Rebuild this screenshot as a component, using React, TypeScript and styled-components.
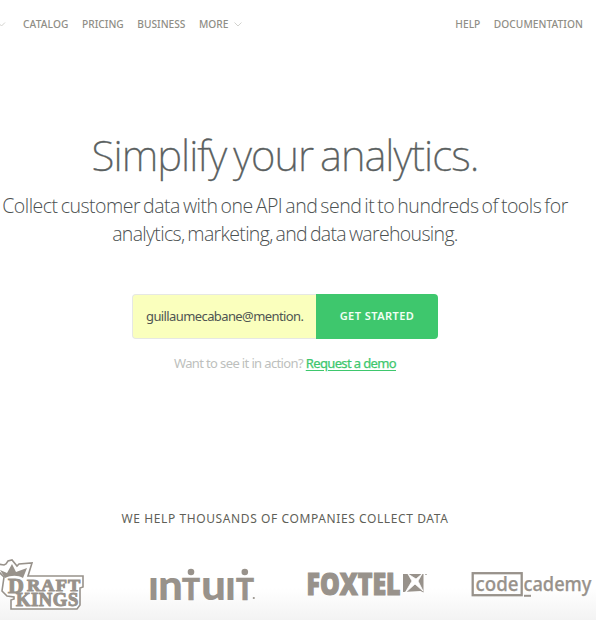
import React from 'react';
import styled, { createGlobalStyle } from 'styled-components';

const GlobalStyle = createGlobalStyle`
  * { box-sizing: border-box; }
  body { margin: 0; background: #fff; overflow: hidden; font-family: 'Noto Sans', sans-serif; }
`;

const Page = styled.div`
  width: 596px;
  height: 620px;
  display: flex;
  flex-direction: column;
  overflow: hidden;
  background: linear-gradient(#fff 0 588px, #f3f3f3 620px);
`;

const NavBar = styled.nav`
  height: 49px;
  padding-right: 13px;
  display: flex;
  align-items: center;
  justify-content: space-between;
`;

const NavGroup = styled.div<{ $gap: number }>`
  display: flex;
  align-items: center;
  gap: ${p => p.$gap}px;
`;

const NavLink = styled.a<{ $track?: number }>`
  font-size: 10.2px;
  line-height: 17px;
  font-weight: 500;
  letter-spacing: ${p => p.$track ?? 0}px;
  color: #8f8e86;
  white-space: nowrap;
`;

const Chevron = styled.svg`
  width: 8px;
  height: 5px;
  fill: none;
  stroke: #d2d2ce;
`;

const Hero = styled.main`
  width: 570px;
  padding-top: 77px;
  display: flex;
  flex-direction: column;
  align-items: center;
`;

const Title = styled.h1`
  margin: 0;
  height: 66px;
  line-height: 58px;
  font-size: 42px;
  font-weight: 200;
  letter-spacing: -0.95px;
  word-spacing: -3px;
  color: #5a5f5f;
  -webkit-text-stroke: 0.35px #5a5f5f;
  white-space: nowrap;
`;

const Lead = styled.p`
  margin: 0;
  font-family: 'Open Sans', sans-serif;
  font-size: 19.5px;
  line-height: 28px;
  font-weight: 300;
  color: #4c5151;
  text-align: center;
`;

const LeadLine = styled.span<{ $track: number }>`
  display: block;
  white-space: nowrap;
  letter-spacing: ${p => p.$track}px;
  word-spacing: -1.5px;
`;

const SignupForm = styled.form`
  display: flex;
  width: 306px;
  height: 45px;
  margin-top: 46px;
`;

const EmailField = styled.div`
  width: 184px;
  padding: 0 0 1px 13px;
  line-height: 42px;
  border: 1px solid #e6e8e4;
  border-right: 0;
  border-radius: 4px 0 0 4px;
  background: #faffbd;
  color: #4f5552;
  font-size: 13px;
  letter-spacing: -0.6px;
  white-space: nowrap;
  overflow: hidden;
`;

const SubmitButton = styled.button`
  flex: 1;
  border: 0;
  padding: 0 0 2px;
  border-radius: 0 4px 4px 0;
  background: #3ec76d;
  color: #f2fff5;
  font: 600 11px 'Noto Sans', sans-serif;
  letter-spacing: 0.45px;
`;

const DemoLine = styled.p`
  margin: 13px 0 0;
  line-height: 22px;
  font-size: 13px;
  letter-spacing: -0.63px;
  color: #bdbfbd;
  white-space: nowrap;
`;

const DemoLink = styled.a`
  color: #3ec76d;
  -webkit-text-stroke: 0.25px #3ec76d;
  text-decoration: underline;
  text-underline-offset: 2px;
`;

const Customers = styled.section`
  width: 596px;
  margin-top: 135px;
`;

const CustomersTitle = styled.h2`
  width: 570px;
  margin: 0;
  font-size: 12px;
  line-height: 20px;
  font-weight: 400;
  letter-spacing: 0.6px;
  text-align: center;
  color: #5f5f58;
`;

const LogoStrip = styled.div`
  display: grid;
  grid-template-columns: 145px 160px 165px 126px;
  margin-top: 21px;
`;

const Logo = styled.svg`
  display: block;
  height: 60px;
  width: 100%;
  fill: #98928b;
`;

const DraftKings = () => (
  <Logo viewBox="0 0 145 60" role="img" aria-label="DraftKings">
    <path d="M4 27-2 21v-7l6 1 2-1 2-3 4-1 5 6 2-2 13-1-4 13h55v11l-3 1v17l-3 4H11v-9l3-1v-2l-7-1-5-5z" fill="#fff" stroke="#98928b" strokeWidth="1.6" />
    <path d="M5 28 0 20l7 3 5-9 4 8 11-4-4 10c-5-3-12-3-18 0z" />
    <g fontFamily="Liberation Serif, serif" fontWeight="700" stroke="#98928b" strokeWidth="1">
      <text transform="translate(8 43) scale(1.1 1)" fontSize="20">D</text>
      <text transform="translate(27 41) scale(1.08 1)" fontSize="17" letterSpacing="1">RAFT</text>
      <text transform="translate(16 56) scale(1.03 1)" fontSize="18" letterSpacing=".6">KINGS</text>
    </g>
  </Logo>
);

const Intuit = () => (
  <Logo viewBox="0 0 160 60" role="img" aria-label="intuit">
    <g fontFamily="Lato, sans-serif" fontWeight="900" fontSize="42">
      <text x="3" y="49.5">ı</text>
      <text x="13" y="49.5" textLength="25" lengthAdjust="spacingAndGlyphs">n</text>
      <text x="37" y="49.5" fontSize="30" stroke="#98928b" strokeWidth=".6" textLength="18" lengthAdjust="spacingAndGlyphs">T</text>
      <text x="56" y="49.5" textLength="25" lengthAdjust="spacingAndGlyphs">u</text>
      <text x="80" y="49.5">ı</text>
      <text x="91" y="49.5" fontSize="30" stroke="#98928b" strokeWidth=".6" textLength="18" lengthAdjust="spacingAndGlyphs">T</text>
    </g>
    <circle cx="46" cy="22" r="3.3" />
    <circle cx="99.8" cy="22" r="3.3" />
    <circle cx="108.8" cy="48" r="1.1" />
  </Logo>
);

const Foxtel = () => (
  <Logo viewBox="0 0 165 60" role="img" aria-label="Foxtel">
    <text x="1.5" y="45.2" fontFamily="Open Sans, sans-serif" fontWeight="800" fontSize="30" textLength="94" lengthAdjust="spacingAndGlyphs" stroke="#98928b" strokeWidth="1.2">FOXTEL</text>
    <path d="M98 24h20.500v18.500l-3-1.500-17.500 1z" />
    <path d="m103 24 4 7-7 12 10-9 8 7-5-10 4-7-6 5z" fill="#fff" stroke="#fff" strokeWidth=".8" />
    <path d="M120 24.500h2" stroke="#b8b5b1" />
  </Logo>
);

const Codecademy = () => (
  <Logo viewBox="0 0 126 60" role="img" aria-label="codecademy">
    <rect x="2.7" y="23.2" width="49" height="22" fill="none" stroke="#98928b" strokeWidth="2.3" />
    <g fontFamily="Noto Sans, sans-serif" fontWeight="500" fontSize="19.5" stroke="#98928b" strokeWidth=".25">
      <text x="5.5" y="41.3" textLength="43" lengthAdjust="spacingAndGlyphs">code</text>
      <text x="53.5" y="41.3" textLength="68" lengthAdjust="spacingAndGlyphs">cademy</text>
    </g>
    <path d="M54 44.800h7v2h-7z" />
  </Logo>
);

export default function App() {
  return (
    <>
      <GlobalStyle />
      <Page>
        <NavBar>
          <NavGroup $gap={13.5}>
            <NavGroup $gap={15}>
              <Chevron viewBox="2.5 0 8 5"><path d="M.5.5 4 4 7.5.5" /></Chevron>
              <NavLink $track={0.12}>CATALOG</NavLink>
            </NavGroup>
            <NavLink>PRICING</NavLink>
            <NavLink>BUSINESS</NavLink>
            <NavGroup $gap={5.5}>
              <NavLink>MORE</NavLink>
              <Chevron viewBox="0 0 8 5"><path d="M.5.5 4 4 7.5.5" /></Chevron>
            </NavGroup>
          </NavGroup>
          <NavGroup $gap={13.5}>
            <NavLink>HELP</NavLink>
            <NavLink $track={0.05}>DOCUMENTATION</NavLink>
          </NavGroup>
        </NavBar>
        <Hero>
          <Title>Simplify your analytics.</Title>
          <Lead>
            <LeadLine $track={-0.5}>Collect customer data with one API and send it to hundreds of tools for</LeadLine>
            <LeadLine $track={-0.67}>analytics, marketing, and data warehousing.</LeadLine>
          </Lead>
          <SignupForm>
            <EmailField>guillaumecabane@mention.</EmailField>
            <SubmitButton type="button">GET STARTED</SubmitButton>
          </SignupForm>
          <DemoLine>Want to see it in action? <DemoLink>Request a demo</DemoLink></DemoLine>
        </Hero>
        <Customers>
          <CustomersTitle>WE HELP THOUSANDS OF COMPANIES COLLECT DATA</CustomersTitle>
          <LogoStrip>
            <DraftKings />
            <Intuit />
            <Foxtel />
            <Codecademy />
          </LogoStrip>
        </Customers>
      </Page>
    </>
  );
}
